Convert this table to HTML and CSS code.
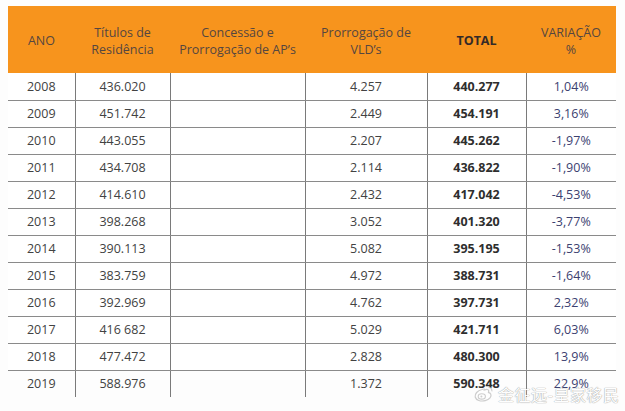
FILE: index.html
```html
<!DOCTYPE html>
<html lang="pt">
<head>
<meta charset="utf-8">
<title>Tabela</title>
<link rel="stylesheet" href="styles.css">
</head>
<body>
<div class="page">
  <table class="grid">
    <colgroup>
      <col class="c1"><col class="c2"><col class="c3"><col class="c4"><col class="c5"><col class="c6">
    </colgroup>
    <thead>
      <tr>
        <th>ANO</th>
        <th>Títulos de<br>Residência</th>
        <th>Concessão e<br>Prorrogação de AP’s</th>
        <th>Prorrogação de<br>VLD’s</th>
        <th class="tot">TOTAL</th>
        <th>VARIAÇÃO<br>%</th>
      </tr>
    </thead>
    <tbody>
      <tr><td>2008</td><td>436.020</td><td></td><td>4.257</td><td class="tot">440.277</td><td class="var">1,04%</td></tr>
      <tr><td>2009</td><td>451.742</td><td></td><td>2.449</td><td class="tot">454.191</td><td class="var">3,16%</td></tr>
      <tr><td>2010</td><td>443.055</td><td></td><td>2.207</td><td class="tot">445.262</td><td class="var">-1,97%</td></tr>
      <tr><td>2011</td><td>434.708</td><td></td><td>2.114</td><td class="tot">436.822</td><td class="var">-1,90%</td></tr>
      <tr><td>2012</td><td>414.610</td><td></td><td>2.432</td><td class="tot">417.042</td><td class="var">-4,53%</td></tr>
      <tr><td>2013</td><td>398.268</td><td></td><td>3.052</td><td class="tot">401.320</td><td class="var">-3,77%</td></tr>
      <tr><td>2014</td><td>390.113</td><td></td><td>5.082</td><td class="tot">395.195</td><td class="var">-1,53%</td></tr>
      <tr><td>2015</td><td>383.759</td><td></td><td>4.972</td><td class="tot">388.731</td><td class="var">-1,64%</td></tr>
      <tr><td>2016</td><td>392.969</td><td></td><td>4.762</td><td class="tot">397.731</td><td class="var">2,32%</td></tr>
      <tr><td>2017</td><td>416 682</td><td></td><td>5.029</td><td class="tot">421.711</td><td class="var">6,03%</td></tr>
      <tr><td>2018</td><td>477.472</td><td></td><td>2.828</td><td class="tot">480.300</td><td class="var">13,9%</td></tr>
      <tr class="last"><td>2019</td><td>588.976</td><td></td><td>1.372</td><td class="tot">590.348</td><td class="var">22,9%</td></tr>
    </tbody>
  </table>
  <div class="watermark">
    <svg class="weibo" width="22" height="18" viewBox="0 0 22 18">
      <path d="M9 4.5C4.5 5.5 1.5 9 2.2 12c0.8 3.2 5.5 4.8 10 3.6 4.4-1.2 6.6-4.2 5.6-6.4-0.6-1.3-2-1.5-2.4-1.8 0.6-1.4 0.4-2.6-1-2.9-1.3-0.3-2.600.4-3 0.5 0.6-1.2-0.4-1.2-2.4-0.5z" fill="#fff" stroke="#c8c8c8" stroke-width="1.2"/>
      <ellipse cx="8.8" cy="11.4" rx="3.6" ry="2.7" fill="none" stroke="#c8c8c8" stroke-width="1.1"/>
      <circle cx="8.4" cy="11.6" r="1" fill="#c8c8c8"/>
      <path d="M15.5 2.2c2.2 0.3 3.6 2 3.4 4.2" fill="none" stroke="#c8c8c8" stroke-width="1.1"/>
    </svg>
    <span class="wm-text">金征远-皇家移民</span>
  </div>
</div>
</body>
</html>
```
FILE: styles.css
```css
html, body {
  margin: 0;
  padding: 0;
  background: #fdfdfd;
}
.page {
  position: relative;
  width: 625px;
  height: 411px;
  padding: 6px 0 0 8px;
  box-sizing: border-box;
  font-family: "Open Sans", "Liberation Sans", "Noto Sans CJK SC", sans-serif;
}
.grid {
  border-collapse: collapse;
  table-layout: fixed;
  width: 608px;
}
.c1 { width: 67px; }
.c2 { width: 95px; }
.c3 { width: 135px; }
.c4 { width: 122px; }
.c5 { width: 99px; }
.c6 { width: 90px; }
thead tr {
  background: #f7941d;
  height: 67px;
}
th {
  font-weight: normal;
  font-size: 12.5px;
  line-height: 17px;
  color: #554640;
  text-align: center;
  vertical-align: middle;
  padding: 0;
  padding-top: 2px;
}
th.tot {
  font-weight: bold;
  color: #332a28;
}
tbody tr {
  height: 27px;
}
td {
  font-size: 12.5px;
  color: #424242;
  text-align: center;
  vertical-align: middle;
  padding: 0;
  border-bottom: 1px solid #8a8a8a;
  border-left: 1px solid #7a7a7a;
  background: #fff;
}
td:first-child {
  border-left: none;
}
tr.last td {
  border-bottom: none;
  background: #fdfdfd;
}
td.tot {
  font-weight: bold;
  color: #2e2e2e;
}
td.var {
  color: #3c4170;
}
.watermark {
  position: absolute;
  left: 473px;
  top: 382px;
  display: flex;
  align-items: center;
  gap: 3px;
  opacity: 0.9;
}
.wm-text {
  font-size: 16px;
  color: #fff;
  letter-spacing: 0.5px;
  text-shadow: 0 0 1px #9a9a9a, 0 0 1px #9a9a9a;
  font-family: "Noto Sans CJK SC", sans-serif;
}
```
